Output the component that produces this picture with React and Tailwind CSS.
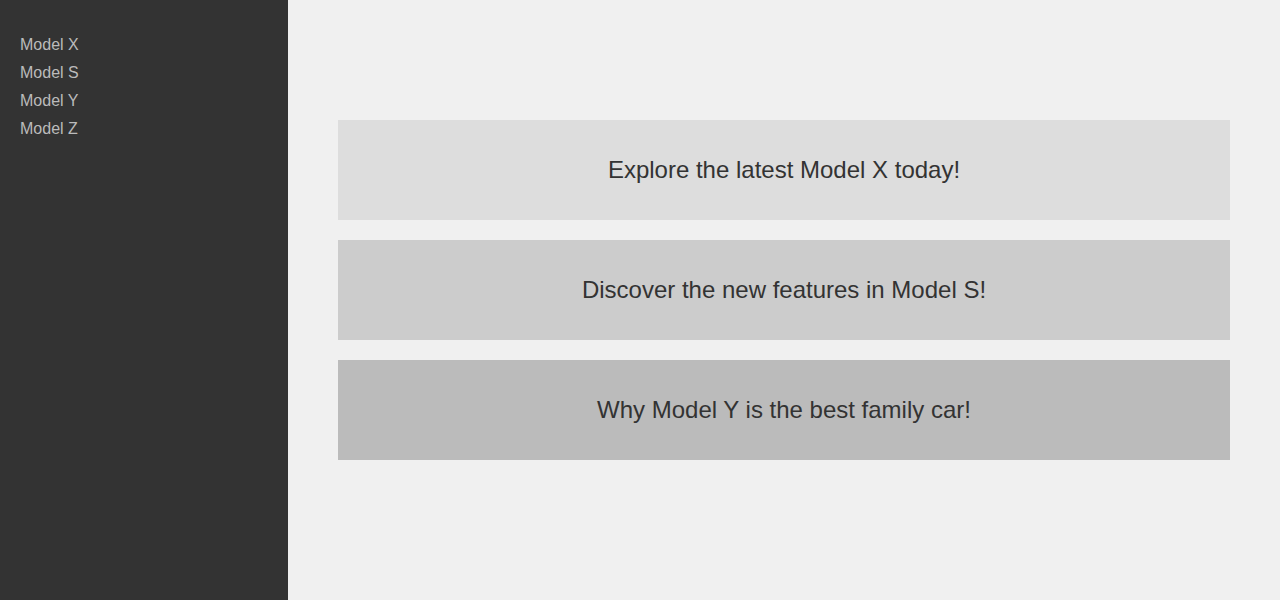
const MODELS = ['Model X', 'Model S', 'Model Y', 'Model Z']

const CARDS = [
  { text: 'Explore the latest Model X today!', bg: 'bg-[#dddddd]' },
  { text: 'Discover the new features in Model S!', bg: 'bg-[#cccccc]' },
  { text: 'Why Model Y is the best family car!', bg: 'bg-[#bbbbbb]' },
]

export default function App() {
  return (
    <div className="flex h-[600px] w-full" style={{ fontFamily: '"Liberation Sans", Arial, sans-serif' }}>
      {/* Sidebar */}
      <aside className="w-[288px] shrink-0 bg-[#333333] px-5 pt-[31px]">
        <ul>
          {MODELS.map(m => (
            <li key={m} className="text-base leading-[28px] text-[#bbbbbb]">{m}</li>
          ))}
        </ul>
      </aside>

      {/* Main */}
      <main className="flex-1 bg-[#f0f0f0] px-[50px] pt-[120px]">
        <div className="flex flex-col gap-5">
          {CARDS.map(c => (
            <div key={c.text} className={`${c.bg} h-[100px] flex items-center justify-center`}>
              <p className="text-2xl text-[#333333]">{c.text}</p>
            </div>
          ))}
        </div>
      </main>
    </div>
  )
}
